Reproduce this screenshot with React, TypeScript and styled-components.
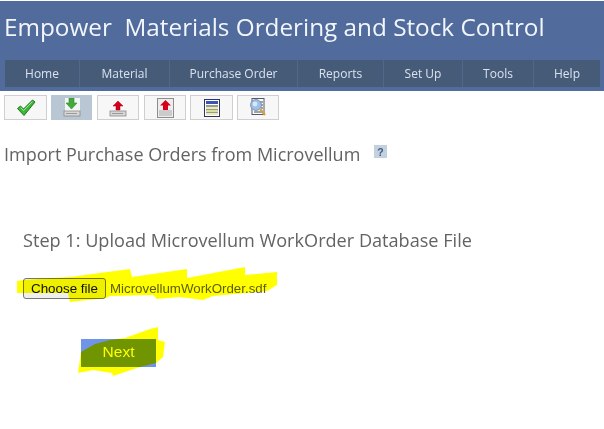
import React from "react";
import styled, { createGlobalStyle } from "styled-components";

const Global = createGlobalStyle`
  html, body { margin: 0; padding: 0; background: #fff; overflow: hidden; }
  body { font-family: "Open Sans", "Noto Sans", sans-serif; }
`;
const Page = styled.div`width: 604px; height: 429px; position: relative; overflow: hidden; background: #fff;`;
const Header = styled.header`
  margin-top: 1px; height: 90px; box-sizing: border-box; background: #506b9c; padding: 0 4px 0 5px;
  display: flex; flex-direction: column;
`;
const Title = styled.h1`
  margin: 9px 0 0 -1px; height: 50px; font-size: 24.3px; line-height: 34px; font-weight: 400; color: #f2f6fb; white-space: pre;
`;
const Nav = styled.nav`display: flex; height: 27px; background: #465b78;`;
const NavItem = styled.div<{ $w: number }>`
  width: ${p => p.$w}px; box-sizing: border-box; display: flex; align-items: center; justify-content: center;
  font-size: 12px; color: #d9e2ee; border-right: 1px solid #50678a;
  &:last-child { border-right: 0; }
`;
const Toolbar = styled.div`display: flex; padding: 4px 0 0 4px; height: 25px;`;
const ToolButton = styled.div<{ $w: number; $gap: number; $active?: boolean }>`
  width: ${p => p.$w}px; margin-right: ${p => p.$gap}px; height: 25px; box-sizing: border-box;
  display: flex; align-items: center; justify-content: center;
  background: ${p => (p.$active ? "#b9c6d3" : "#f7f7f7")};
  border: 1px solid ${p => (p.$active ? "#b9c6d3" : "#cfcfcf")};
`;
const PageHeading = styled.div`display: flex; align-items: center; margin: 21px 0 0 4px; height: 26px;`;
const Heading = styled.h2`margin: 0; font-size: 18px; font-weight: 400; color: #636363; line-height: 26px;`;
const Help = styled.div`margin: -5px 0 0 14px; display: flex;`;
const Upload = styled.section`position: relative; padding: 60px 0 0 23px;`;
const Step = styled.h3`margin: 0; font-size: 18.13px; font-weight: 400; color: #636363; line-height: 26px;`;
const FileRow = styled.div`display: flex; align-items: center; margin-top: 25px; height: 21px;`;
const ChooseButton = styled.button`
  width: 83px; height: 21px; padding: 0; box-sizing: border-box; background: #efefef; border: 1px solid #767676; border-radius: 3px;
  font: 13.4px "Liberation Sans", Arial, sans-serif; color: #111;
`;
const FileName = styled.span`margin-left: 4px; font: 13.3px "Liberation Sans", Arial, sans-serif; color: #5e5e5e;`;
const NextButton = styled.button`
  display: block; margin: 40px 0 0 58px; width: 75px; height: 28px; padding: 0 0 3px; border: 0; background: #7095e8;
  color: #fff; font: 15.5px "Liberation Sans", Arial, sans-serif;
`;
const Marker = styled.svg`position: absolute; left: 0; top: 0; width: 604px; height: 429px; mix-blend-mode: multiply; pointer-events: none;`;

const Check = () => (
  <svg width="20" height="18" viewBox="0 0 20 18">
    <path d="M1.5 9.5 L4.5 7 L7.5 10 L16.5 1 L19 3 L8 16.5 Z" fill="#3fb53a" stroke="#1d7a1d" strokeWidth="1" strokeLinejoin="round" />
    <path d="M4.5 8.5 L7.5 11.5 L16.5 2.5" fill="none" stroke="#a6e88f" strokeWidth="1" />
  </svg>
);
const Tray = () => (
  <>
    <rect x="1" y="13" width="16" height="5" fill="#d7d7d7" stroke="#8b8b8b" strokeWidth=".8" />
    <rect x="3" y="15" width="11" height="1" fill="#9a9a9a" />
  </>
);
const Download = () => (
  <svg width="18" height="19" viewBox="0 0 18 19">
    <rect x="2" y="0" width="15" height="14" fill="#f4f6f4" />
    <Tray />
    <path d="M6 0 H11 V5 H14 L8.5 11 L3 5 H6 Z" fill="#43a93c" stroke="#2f8a2c" strokeWidth=".6" />
  </svg>
);
const Upl = () => (
  <svg width="18" height="19" viewBox="0 0 18 19">
    <Tray />
    <path d="M9 3 L14 8 H11 V12 H7 V8 H4 Z" fill="#d5001c" stroke="#a80014" strokeWidth=".5" />
  </svg>
);
const UplDoc = () => (
  <svg width="17" height="20" viewBox="0 0 17 20">
    <rect x=".5" y=".5" width="16" height="19" fill="#ededed" stroke="#8d8d8d" />
    <path d="M2 13h13M2 15h13M2 17h13" stroke="#a9a9a9" />
    <path d="M8.5 2 L14 7.5 H11 V12 H6 V7.5 H3 Z" fill="#d5001c" />
  </svg>
);
const Sheet = () => (
  <svg width="16" height="18" viewBox="0 0 16 18">
    <rect x=".5" y=".5" width="15" height="17" fill="#fff" stroke="#2b3566" />
    <rect x="2" y="2" width="12" height="3" fill="#3a55b5" />
    <path d="M2 7h12M2 10h12M2 13h12" stroke="#30362a" />
    <rect x="2" y="8" width="12" height="2" fill="#ecebb0" />
    <rect x="2" y="11" width="12" height="2" fill="#d9dfa0" />
    <rect x="2" y="14" width="12" height="2" fill="#ecebb0" />
  </svg>
);
const Search = () => (
  <svg width="18" height="20" viewBox="0 0 18 20">
    <rect x="3" y=".5" width="12" height="16" fill="#fff" stroke="#55586a" />
    <path d="M9 4h5M11 7h3M12 10h2M5 14h8" stroke="#444" />
    <circle cx="7" cy="7" r="5.4" fill="#9dbfe8" stroke="#7d95b5" />
    <circle cx="6" cy="6" r="2.4" fill="#d9e8f8" />
    <path d="M11 11 L16 17" stroke="#c9a64a" strokeWidth="2.4" />
  </svg>
);
const HelpIcon = () => (
  <svg width="13" height="13" viewBox="0 0 13 13">
    <rect width="13" height="13" fill="#c3d0de" />
    <text x="6.5" y="10.5" textAnchor="middle" fontSize="10.5" fontWeight="700" fontFamily="Liberation Sans, sans-serif" fill="#3d5a85">?</text>
  </svg>
);

const navItems: [string, number][] = [
  ["Home", 75], ["Material", 90], ["Purchase Order", 128], ["Reports", 86], ["Set Up", 79], ["Tools", 71], ["Help", 66],
];

export default function App() {
  return (
    <Page>
      <Global />
      <Header>
        <Title>Empower  Materials Ordering and Stock Control</Title>
        <Nav>
          {navItems.map(([t, w]) => <NavItem key={t} $w={w}>{t}</NavItem>)}
        </Nav>
      </Header>
      <Toolbar>
        <ToolButton $w={43} $gap={4}><Check /></ToolButton>
        <ToolButton $w={41} $gap={5} $active><Download /></ToolButton>
        <ToolButton $w={42} $gap={5}><Upl /></ToolButton>
        <ToolButton $w={42} $gap={4}><UplDoc /></ToolButton>
        <ToolButton $w={43} $gap={4}><Sheet /></ToolButton>
        <ToolButton $w={42} $gap={0}><Search /></ToolButton>
      </Toolbar>
      <PageHeading>
        <Heading>Import Purchase Orders from Microvellum</Heading>
        <Help><HelpIcon /></Help>
      </PageHeading>
      <Upload>
        <Step>Step 1: Upload Microvellum WorkOrder Database File</Step>
        <FileRow>
          <ChooseButton>Choose file</ChooseButton>
          <FileName>MicrovellumWorkOrder.sdf</FileName>
        </FileRow>
        <NextButton>Next</NextButton>
      </Upload>
      <Marker viewBox="0 0 604 429">
        <path
          fill="#ffff00"
          d="M17 281 L23 280 L70 277 L130 269 L132 277 L187 269 L187 278 L245 267 L245 275 L277 272 L277 285 L267 291 L213 296 L203 300 L180 297 L157 299 L153 295 L110 296 L106 298 L70 302 L68 293 L17 293 Z"
        />
        <path
          fill="#ffff00"
          d="M78 373 L81 352 L95 344 L110 340 L125 338 L150 329 L158 327 L158 340 L165 342 L163 357 L156 363 L140 367 L113 376 L112 373 L93 370 Z"
        />
      </Marker>
    </Page>
  );
}
